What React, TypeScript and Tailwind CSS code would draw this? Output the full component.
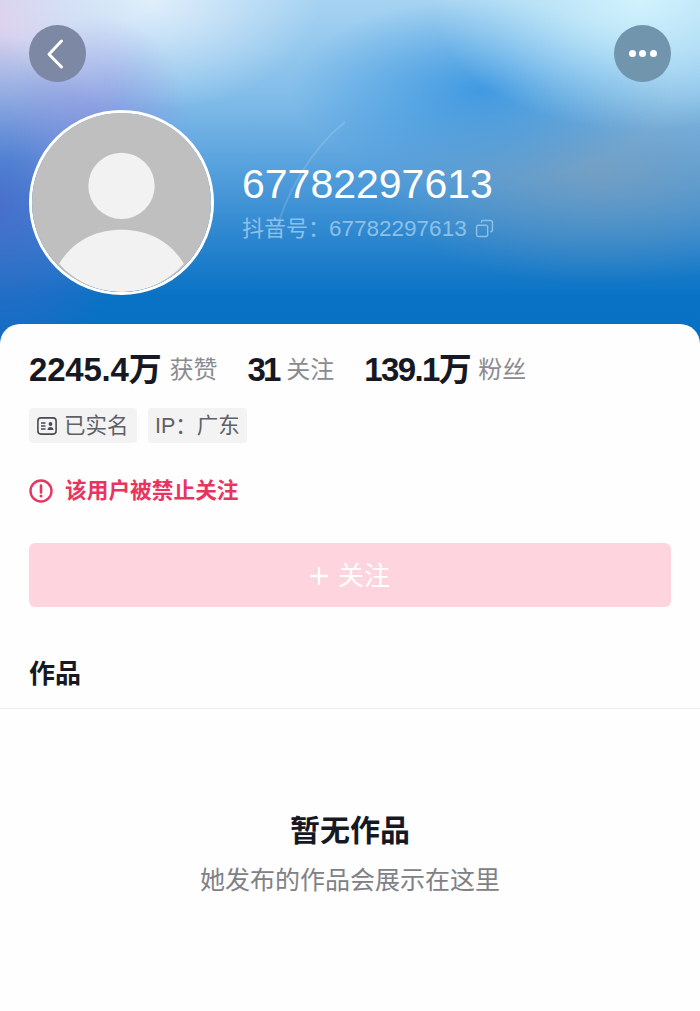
import { Copy } from 'lucide-react';

const stats = [
  { value: '2245.4万', label: '获赞', valueClass: 'tracking-[-0.2px]' },
  { value: '31', label: '关注', valueClass: 'tracking-[-3px]' },
  { value: '139.1万', label: '粉丝', valueClass: 'tracking-[-1.6px]' },
];

function DefaultAvatar() {
  return (
    <svg viewBox="0 0 178 178" className="block h-full w-full">
      <circle cx="89" cy="89" r="89.5" fill="#bfbfbf" />
      <circle cx="89" cy="72.5" r="33" fill="#f2f2f2" />
      <path d="M27 150C40 128 62 116 89 116C116 116 138 128 151 150C135 168 113 178 89 178C65 178 43 168 27 150Z" fill="#f2f2f2" />
    </svg>
  );
}

export default function App() {
  return (
    <div className="h-[1011px] w-[700px] overflow-hidden bg-[#fefefe] font-['Liberation_Sans','Noto_Sans_CJK_SC',sans-serif]">
      <header className="relative h-[344px] bg-[radial-gradient(ellipse_90px_110px_at_100px_125px,rgba(150,130,220,0.55),transparent),radial-gradient(ellipse_130px_170px_at_0px_205px,rgba(75,100,200,0.75),transparent),radial-gradient(ellipse_170px_110px_at_150px_0px,rgba(235,243,253,0.85),transparent),radial-gradient(ellipse_150px_140px_at_0px_20px,rgba(226,208,236,0.95),transparent),radial-gradient(ellipse_210px_130px_at_640px_0px,rgba(210,244,253,0.95),transparent),radial-gradient(ellipse_190px_90px_at_480px_90px,rgba(30,135,222,0.65),transparent),radial-gradient(ellipse_230px_110px_at_600px_175px,rgba(135,160,180,0.6),transparent),linear-gradient(180deg,#a6d3f2_0%,#82bde9_28%,#509cdb_52%,#2a85ce_70%,#0a72c4_86%,#0670c2_100%)] px-[29px] pt-[25px]">
        <svg className="absolute top-0 left-0" width="700" height="324" viewBox="0 0 700 324" fill="none">
          <path d="M345 122C310 150 285 195 275 235" stroke="#fff" strokeOpacity="0.14" strokeWidth="2" />
        </svg>
        <div className="relative flex items-start justify-between">
          <button className="flex h-[57px] w-[57px] items-center justify-center rounded-full bg-[#7d88a5]">
            <svg width="24" height="32" viewBox="0 0 24 32" fill="none" stroke="#fff" strokeWidth="3" strokeLinecap="round" strokeLinejoin="round" className="-ml-[3px]">
              <path d="M17.5 3L5 16.2L17.5 29" />
            </svg>
          </button>
          <button className="flex h-[57px] w-[57px] items-center justify-center gap-[3.5px] rounded-full bg-[#7295ae]">
            <span className="h-[7px] w-[7px] rounded-full bg-white" />
            <span className="h-[7px] w-[7px] rounded-full bg-white" />
            <span className="h-[7px] w-[7px] rounded-full bg-white" />
          </button>
        </div>
        <div className="relative mt-[28px] flex items-center gap-[28px]">
          <div className="h-[185px] w-[185px] shrink-0 overflow-hidden rounded-full border-[3.5px] border-white">
            <DefaultAvatar />
          </div>
          <div className="-mt-[2px]">
            <div className="text-[41px] leading-[46px] text-white">67782297613</div>
            <div className="mt-[8px] flex items-center text-[22.5px] leading-[28px] text-[#8dc0e8]">
              <span className="text-[22px]">抖音号：</span>
              <span className="-ml-[1px]">67782297613</span>
              <Copy size={19} className="ml-[8px] -scale-x-100" strokeWidth={1.8} />
            </div>
          </div>
        </div>
      </header>

      <main className="relative -mt-[20px] rounded-t-[20px] bg-[#fefefe]">
        <div className="px-[29px] pt-[26px]">
          <div className="flex items-center gap-[30px]">
            {stats.map((stat) => (
              <div key={stat.label} className="flex items-center gap-[8px]">
                <span className={`text-[33px] leading-[40px] font-bold text-[#161823] ${stat.valueClass}`}>{stat.value}</span>
                <span className="text-[24px] leading-[40px] text-[#8a8b91]">{stat.label}</span>
              </div>
            ))}
          </div>
          <div className="mt-[18px] flex gap-[11px]">
            <div className="flex h-[35px] items-center gap-[7px] rounded-[4px] bg-[#f3f3f4] px-[8px] text-[21.5px] text-[#5f6066]">
              <svg width="20" height="18" viewBox="0 0 20 18" fill="none">
                <rect x="0.9" y="0.9" width="18.2" height="16.2" rx="3" stroke="#4a4b52" strokeWidth="1.6" />
                <path d="M4 6h4.5M4 9h4.5M4 12h4.5" stroke="#4a4b52" strokeWidth="1.5" />
                <circle cx="13.5" cy="7" r="1.9" fill="#4a4b52" />
                <path d="M10.5 13c0-2 1.3-3 3-3s3 1 3 3z" fill="#4a4b52" />
              </svg>
              <span className="pt-[1px]">已实名</span>
            </div>
            <div className="flex h-[35px] items-center rounded-[4px] bg-[#f3f3f4] px-[7.5px] pt-[1px] text-[21.5px] text-[#5f6066]">IP：广东</div>
          </div>
          <div className="mt-[30px] flex items-center gap-[12px] text-[21.7px] leading-[36px] font-bold text-[#e8345f]">
            <svg width="24" height="24" viewBox="0 0 24 24" fill="none">
              <circle cx="12" cy="12" r="10.5" stroke="#e8345f" strokeWidth="2.4" />
              <path d="M12 6.5V13.5" stroke="#e8345f" strokeWidth="2.6" strokeLinecap="round" />
              <circle cx="12" cy="17" r="1.5" fill="#e8345f" />
            </svg>
            该用户被禁止关注
          </div>
          <button className="mt-[34px] flex h-[64px] w-full items-center justify-center gap-[10px] rounded-[6px] bg-[#fed4df] pt-[2px] text-[26px] text-white">
            <svg width="18" height="18" viewBox="0 0 18 18" stroke="#fff" strokeWidth="2.4">
              <path d="M9 0V18M0 9H18" />
            </svg>
            关注
          </button>
        </div>
        <div className="mt-[49px] border-b border-[#ececec] px-[29px] pb-[16px] text-[26px] leading-[36px] font-bold text-[#161823]">作品</div>
        <div className="flex flex-col items-center pt-[100px]">
          <div className="text-[30px] leading-[44px] font-bold text-[#161823]">暂无作品</div>
          <div className="mt-[9px] text-[25px] leading-[36px] text-[#808186]">她发布的作品会展示在这里</div>
        </div>
      </main>
    </div>
  );
}
